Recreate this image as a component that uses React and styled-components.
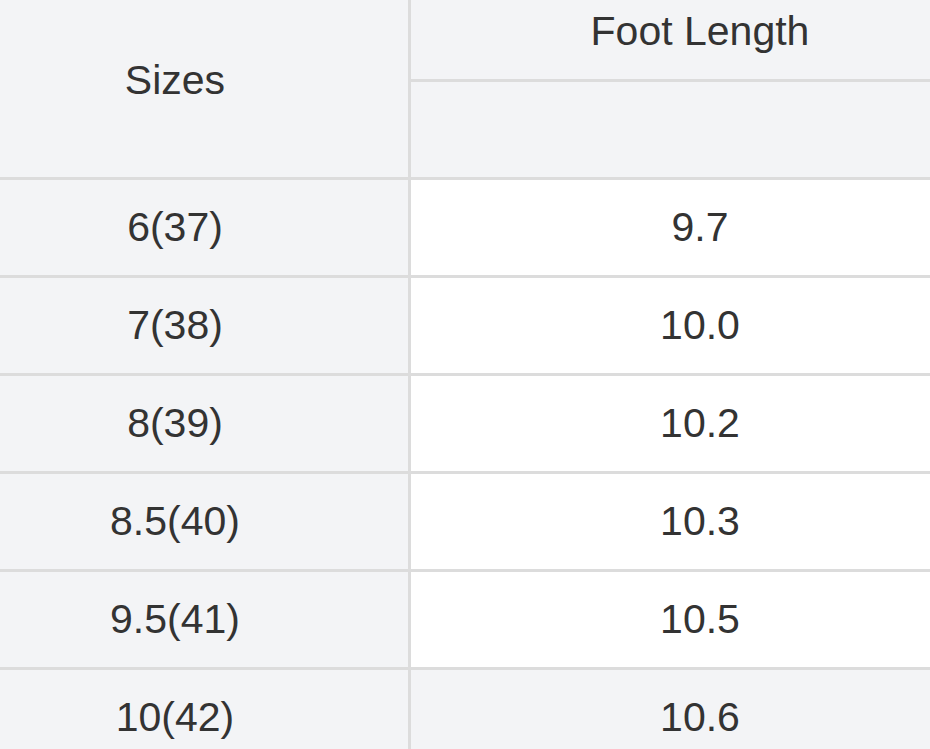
import React from 'react';
import styled, { createGlobalStyle } from 'styled-components';

const GlobalStyle = createGlobalStyle`
  html, body {
    margin: 0;
    padding: 0;
    background: #fff;
    overflow: hidden;
  }
`;

const Viewport = styled.div`
  width: 930px;
  height: 749px;
  overflow: hidden;
`;

const Table = styled.div`
  display: grid;
  grid-template-columns: 466px 578px;
  grid-auto-rows: 95px;
  gap: 3px;
  width: 1047px;
  margin: -16px 0 0 -58px;
  background-color: #dcdcdc;
  font-family: 'Liberation Sans', Arial, sans-serif;
  font-size: 41px;
  color: #333;
`;

const Cell = styled.div`
  display: flex;
  align-items: center;
  justify-content: center;
  background-color: ${({ $light }) => ($light ? '#ffffff' : '#f3f4f6')};
  grid-row: ${({ $span }) => ($span ? `span ${$span}` : 'auto')};
`;

const rows = [
  ['6(37)', '9.7'],
  ['7(38)', '10.0'],
  ['8(39)', '10.2'],
  ['8.5(40)', '10.3'],
  ['9.5(41)', '10.5'],
  ['10(42)', '10.6'],
];

export default function App() {
  return (
    <Viewport>
      <GlobalStyle />
      <Table>
        <Cell $span={2}>Sizes</Cell>
        <Cell>Foot Length</Cell>
        <Cell />
        {rows.map(([size, length], i) => (
          <React.Fragment key={size}>
            <Cell>{size}</Cell>
            <Cell $light={i < rows.length - 1}>{length}</Cell>
          </React.Fragment>
        ))}
      </Table>
    </Viewport>
  );
}
